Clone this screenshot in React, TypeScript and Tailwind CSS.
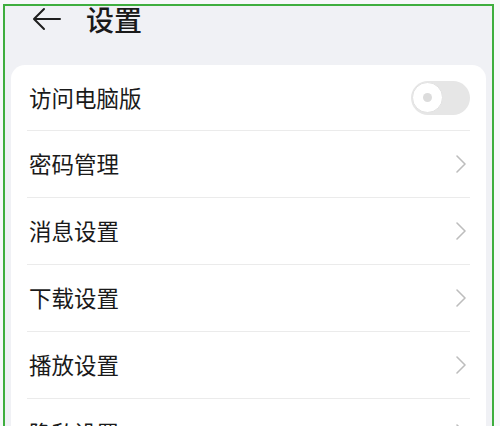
import React from 'react';

const ROWS = ['密码管理', '消息设置', '下载设置', '播放设置', '隐私设置'];

function Chevron() {
  return (
    <svg width="12" height="20" viewBox="0 0 12 20" fill="none" className="mr-[3px]">
      <path d="M2 2l8 8-8 8" stroke="#bdbdbd" strokeWidth="1.6" strokeLinecap="round" strokeLinejoin="round" />
    </svg>
  );
}

function Toggle() {
  return (
    <div className="w-[59px] h-[34px] rounded-full bg-[#e6e6e6] flex items-center pl-[1px]">
      <div className="w-[31px] h-[31px] rounded-full bg-white border border-[#e2e2e2] flex items-center justify-center">
        <div className="w-[9px] h-[9px] rounded-full bg-[#dcdcdc]" />
      </div>
    </div>
  );
}

export default function App() {
  return (
    <div
      className="w-[500px] h-[426px] overflow-hidden bg-[#f7f8fa]"
      style={{ fontFamily: '"Noto Sans CJK SC", "Noto Sans", sans-serif' }}
    >
      <div className="ml-[3px] mt-[4px] w-[491px] h-[440px] border-2 border-[#3fae3f] bg-[#f0f1f5]">
        {/* header */}
        <div className="flex items-center mt-[-1px] h-[28px] pl-[27px]">
          <svg width="29" height="24" viewBox="0 0 29 24" fill="none">
            <path d="M28 12H3M12 2L2 12l10 10" stroke="#1f1f1f" strokeWidth="2" strokeLinecap="round" strokeLinejoin="round" />
          </svg>
          <span className="ml-[25px] text-[28px] leading-[28px] text-[#1a1a1a] font-medium">设置</span>
        </div>

        {/* card */}
        <div className="mt-[32px] ml-[6px] w-[475px] bg-white rounded-[14px]">
          <div className="mx-4 h-[66px] flex items-center justify-between border-b border-[#ebebeb]">
            <span className="pl-[2px] text-[22.5px] text-[#1a1a1a]">访问电脑版</span>
            <Toggle />
          </div>
          {ROWS.map((r, i) => (
            <div
              key={r}
              className={`mx-4 h-[67px] flex items-center justify-between ${i < ROWS.length - 1 ? 'border-b border-[#ebebeb]' : ''}`}
            >
              <span className="pl-[2px] text-[22.5px] text-[#1a1a1a]">{r}</span>
              <Chevron />
            </div>
          ))}
        </div>
      </div>
    </div>
  );
}
